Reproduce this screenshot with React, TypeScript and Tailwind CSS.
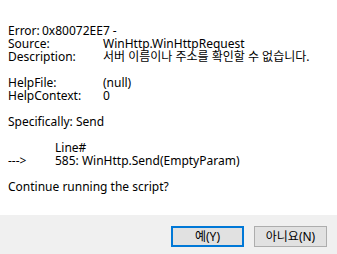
import React from 'react';

export default function App() {
  const rows: [string, string][] = [
    ["Source:", "WinHttp.WinHttpRequest"],
    ["Description:", "서버 이름이나 주소를 확인할 수 없습니다."],
  ];
  const help: [string, string][] = [
    ["HelpFile:", "(null)"],
    ["HelpContext:", "0"],
  ];

  return (
    <div
      className="w-[337px] h-[254px] bg-white flex flex-col text-black text-[12px] leading-[13px]"
      style={{ fontFamily: '"Noto Sans", "Noto Sans CJK KR", sans-serif' }}
    >
      <div className="flex-1 pt-[24px] pl-[8px]">
        <div className="flex h-[13px]">
          <span className="w-[34px]">Error:</span>
          <span>0x80072EE7 -</span>
        </div>
        {rows.map(([k, v]) => (
          <div key={k} className="flex h-[13px]">
            <span className="w-[95px]">{k}</span>
            <span>{v}</span>
          </div>
        ))}
        <div className="h-[13px]" />
        {help.map(([k, v]) => (
          <div key={k} className="flex h-[13px]">
            <span className="w-[95px]">{k}</span>
            <span>{v}</span>
          </div>
        ))}
        <div className="h-[13px]" />
        <div className="h-[13px]">Specifically: Send</div>
        <div className="h-[13px]" />
        <div className="h-[13px] pl-[47px]">Line#</div>
        <div className="flex h-[13px]">
          <span className="w-[47px]">---&gt;</span>
          <span>585: WinHttp.Send(EmptyParam)</span>
        </div>
        <div className="h-[13px]" />
        <div className="h-[13px]">Continue running the script?</div>
      </div>

      <div className="h-[39px] bg-[#f0f0f0] flex justify-end items-start gap-[10px] pt-[11px] pr-[10px]">
        <button className="w-[73px] h-[21px] bg-[#e1e1e1] border-2 border-[#0078d7] flex items-center justify-center text-[12px]">
          예(Y)
        </button>
        <button className="w-[73px] h-[21px] bg-[#e1e1e1] border border-[#adadad] flex items-center justify-center text-[12px]">
          아니요(N)
        </button>
      </div>
    </div>
  );
}
